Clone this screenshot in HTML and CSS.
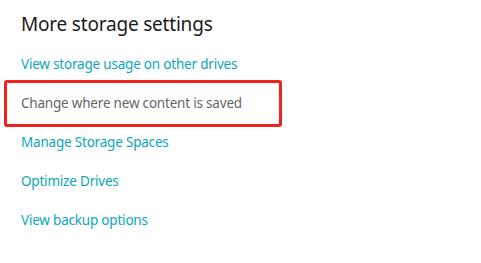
FILE: index.html
```
<!DOCTYPE html>
<html lang="en">
<head>
    <meta charset="UTF-8">
    <title>Storage settings</title>
    <link rel="stylesheet" href="styles.css">
</head>
<body>
    <div class="section">
        <h2 class="section-title">More storage settings</h2>
        <div class="links">
            <a class="link" href="#">View storage usage on other drives</a>
            <div class="link-row marked">
                <span class="link muted">Change where new content is saved</span>
                <div class="mark"></div>
            </div>
            <a class="link" href="#">Manage Storage Spaces</a>
            <a class="link" href="#">Optimize Drives</a>
            <a class="link" href="#">View backup options</a>
        </div>
    </div>
</body>
</html>
```
FILE: styles.css
```
body {
    margin: 0;
    background: #ffffff;
    font-family: "Noto Sans", "Open Sans", sans-serif;
    color: #111111;
}

a {
    text-decoration: none;
}

.section {
    padding: 10px 20px 0 21px;
}

.section-title {
    margin: 0;
    font-size: 19px;
    font-weight: 400;
    letter-spacing: -0.2px;
    line-height: 28px;
    color: #1a1a1a;
}

.links {
    display: flex;
    flex-direction: column;
    padding-top: 17px;
}

.link {
    display: block;
    font-size: 13.5px;
    letter-spacing: -0.2px;
    line-height: 19px;
    height: 19px;
    margin-bottom: 20px;
    color: #0aa8b8;
}

.link-row {
    position: relative;
}

.muted {
    color: #666666;
}

.mark {
    position: absolute;
    left: -17px;
    top: -14px;
    width: 272px;
    height: 41px;
    border: 3px solid #f0231c;
    border-radius: 3px;
}
```
